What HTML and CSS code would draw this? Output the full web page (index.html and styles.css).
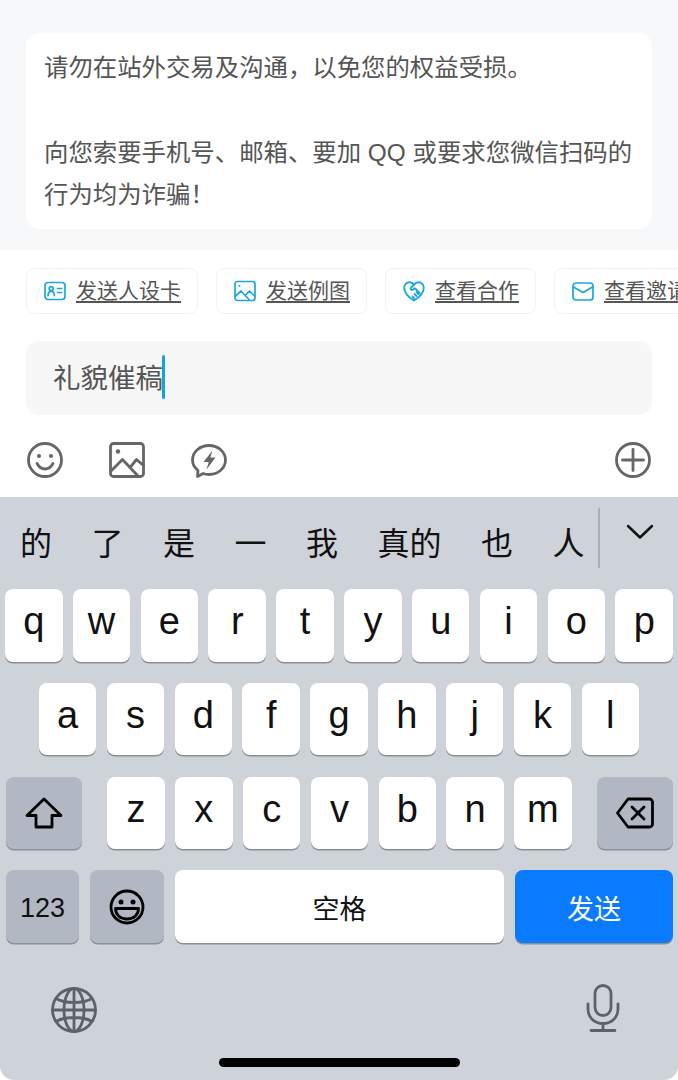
FILE: index.html
```html
<!DOCTYPE html>
<html lang="zh-CN">
  <head>
    <meta charset="UTF-8" />
    <meta name="viewport" content="width=device-width, initial-scale=1.0" />
    <title>私信</title>
    <link rel="stylesheet" href="styles.css">
  </head>
  <body>
    <section class="notice">
      <p class="notice-card">请勿在站外交易及沟通，以免您的权益受损。<br /><br />向您索要手机号、邮箱、要加 QQ 或要求您微信扫码的行为均为诈骗！</p>
    </section>

    <section class="composer">
      <div class="chips">
        <a class="chip">
          <svg class="chip-icon" viewBox="0 0 22 22"><rect x="1" y="2.500" width="20" height="17" rx="3"/><circle cx="7.200" cy="8.600" r="2"/><path d="M4 15.600c.3-3 1.500-4.400 3.200-4.400s2.900 1.400 3.200 4.400M13.500 8.500h4M13.500 12.500h4"/></svg>
          <span>发送人设卡</span>
        </a>
        <a class="chip">
          <svg class="chip-icon" viewBox="0 0 22 22"><rect x="1" y="1.500" width="20" height="19" rx="2.500"/><circle cx="5.500" cy="6" r="1" class="fill"/><path d="M1.500 16l5.500-5 8.500 9M12 14.500l3.500-3.500 5 5"/></svg>
          <span>发送例图</span>
        </a>
        <a class="chip">
          <svg class="chip-icon chip-heart" viewBox="0 0 22 22"><path d="M11 20.500C8.500 19 1.200 14 1.200 7.800 1.200 4.600 3.600 2.200 6.500 2.200c1.900 0 3.400.9 4.500 2.400 1.100-1.500 2.600-2.400 4.500-2.400 2.900 0 5.300 2.400 5.300 5.600 0 6.200-7.300 11.200-9.800 12.700z"/><path d="M11 4.800L7.800 8c-.9 1.200.7 2.600 1.900 1.800l2.100-1.600 5 5M9.500 16.500l1.500 1.500M11.500 14l2 2M13.500 12l2 2"/></svg>
          <span>查看合作</span>
        </a>
        <a class="chip">
          <svg class="chip-icon" viewBox="0 0 22 22"><rect x="1" y="3" width="20" height="17" rx="3"/><path d="M1.500 7l9.500 5.500L20.500 7"/></svg>
          <span>查看邀请</span>
        </a>
      </div>

      <div class="input-box">
        <span class="input-text">礼貌催稿</span><i class="caret"></i>
      </div>

      <div class="tools">
        <svg class="tool" viewBox="0 0 36 36"><circle cx="18" cy="18" r="16.500"/><circle cx="12" cy="14" r="2" class="fill"/><circle cx="24" cy="14" r="2" class="fill"/><path d="M10 21.500c2 3.700 4.800 5.500 8 5.500s6-1.800 8-5.500"/></svg>
        <svg class="tool" viewBox="0 0 36 36"><rect x="1.500" y="1.500" width="33" height="33" rx="3"/><circle cx="9" cy="9.500" r="2.200" class="fill"/><path d="M2 29l11.500-11.500L29 34M21 25.500l6.500-8 7 6"/></svg>
        <svg class="tool" viewBox="0 0 36 36"><path d="M18 3.500c9.200 0 16.500 6.400 16.500 14.500S27.200 32.500 18 32.500c-2 0-4-.3-5.800-1L6.500 34.500l.5-6C3.500 25.700 1.500 22 1.500 18 1.500 9.900 8.800 3.500 18 3.500z"/><path d="M21.500 8.500L12.500 20h5.200L15.500 27.500 24.500 15.500h-5.200z" class="fill"/></svg>
        <svg class="tool tool-end" viewBox="0 0 36 36"><circle cx="18" cy="18" r="16.500"/><path d="M18 7.500v21M7.500 18h21"/></svg>
      </div>
    </section>

    <section class="keyboard">
      <div class="candidates">
        <div class="candidate-list">
          <span>的</span><span>了</span><span>是</span><span>一</span><span>我</span><span>真的</span><span>也</span><span>人</span>
        </div>
        <div class="more">
          <svg viewBox="0 0 28 16"><path d="M2 2l12 11.500L26 2"/></svg>
        </div>
      </div>

      <div class="key-row">
        <b class="key">q</b><b class="key">w</b><b class="key">e</b><b class="key">r</b><b class="key">t</b><b class="key">y</b><b class="key">u</b><b class="key">i</b><b class="key">o</b><b class="key">p</b>
      </div>
      <div class="key-row row-center">
        <b class="key">a</b><b class="key">s</b><b class="key">d</b><b class="key">f</b><b class="key">g</b><b class="key">h</b><b class="key">j</b><b class="key">k</b><b class="key">l</b>
      </div>
      <div class="key-row row-shift">
        <b class="key key-dark key-wide key-shift">
          <svg class="key-icon" viewBox="0 0 38 32"><path d="M19 2L2 18.500h9v11.500h16V18.500h9z"/></svg>
        </b>
        <b class="key">z</b><b class="key">x</b><b class="key">c</b><b class="key">v</b><b class="key">b</b><b class="key">n</b><b class="key">m</b>
        <b class="key key-dark key-wide key-back">
          <svg class="key-icon" viewBox="0 0 38 32"><path d="M12 2h21.500a3 3 0 0 1 3 3v22a3 3 0 0 1-3 3H12L1.500 16z"/><path d="M16 10l12 12M28 10L16 22"/></svg>
        </b>
      </div>
      <div class="key-row row-bottom">
        <b class="key key-dark key-num">123</b>
        <b class="key key-dark key-emoji">
          <svg class="key-icon" viewBox="0 0 36 36"><circle cx="18" cy="18" r="16"/><circle cx="12" cy="13" r="2.500" class="fill"/><circle cx="24" cy="13" r="2.500" class="fill"/><path d="M6.500 19.500h23c0 6.500-5 10.500-11.500 10.500S6.500 26 6.500 19.500z"/></svg>
        </b>
        <b class="key key-space">空格</b>
        <b class="key key-send">发送</b>
      </div>

      <div class="sys-row">
        <svg class="sys-icon globe" viewBox="0 0 46 46"><circle cx="23" cy="23" r="21.500"/><ellipse cx="23" cy="23" rx="10" ry="21.500"/><path d="M23 1.500v43M1.500 23h43M5 11.500c5 3 11 4 18 4s13-1 18-4M5 34.500c5-3 11-4 18-4s13 1 18 4"/></svg>
        <svg class="sys-icon mic" viewBox="0 0 34 48"><rect x="9" y="1.500" width="16" height="30" rx="8"/><path d="M2 20v5c0 8.500 6.500 14.500 15 14.500S32 33.500 32 25v-5M17 39.500v6.500M5 46.500h24"/></svg>
      </div>
      <div class="home-bar"></div>
    </section>
  </body>
</html>
```

FILE: styles.css
```css
* {
  margin: 0;
  padding: 0;
  box-sizing: border-box;
}
html,
body {
  height: 1080px;
  overflow: hidden;
}
body {
  background: #fff;
  color: #555;
  font-family: "Liberation Sans", "Noto Sans CJK SC", sans-serif;
}
svg {
  display: block;
  fill: none;
  stroke-linecap: round;
  stroke-linejoin: round;
}
.fill {
  fill: currentColor;
  stroke: none;
}

.notice {
  height: 250px;
  padding: 33px 26px 0;
  background: #f6f8fa;
}
.notice-card {
  height: 196px;
  padding: 13.500px 18px;
  border-radius: 14px;
  background: #fff;
  font-size: 24.400px;
  line-height: 42.500px;
}

.composer {
  height: 247px;
  padding-top: 18px;
  overflow: hidden;
}
.chips {
  display: flex;
  gap: 18px;
  padding-left: 26px;
  width: 900px;
}
.chip {
  display: flex;
  align-items: center;
  gap: 10px;
  height: 46px;
  padding: 0 16px 0 18px;
  border: 1px solid #f1f2f4;
  border-radius: 8px;
  font-size: 21px;
  text-decoration: underline;
  text-underline-offset: 3px;
}
.chip span {
  margin-top: -4px;
}
.chip-icon {
  width: 22px;
  height: 22px;
  margin-left: -1px;
  stroke: #1ba6d9;
  stroke-width: 1.700;
  color: #1ba6d9;
}
.chip-heart {
  stroke-width: 1.900;
}

.input-box {
  display: flex;
  align-items: center;
  height: 74px;
  margin: 27px 26px 0;
  padding-left: 27px;
  border-radius: 14px;
  background: #f7f7f7;
  font-size: 27.500px;
}
.input-text {
  margin-top: -4px;
}
.caret {
  width: 3px;
  height: 44px;
  margin: -2px 0 0 -1px;
  border-radius: 2px;
  background: #12a4dc;
}

.tools {
  display: flex;
  gap: 46px;
  height: 36px;
  margin: 27px 27px 0;
  color: #666;
}
.tool {
  width: 36px;
  height: 36px;
  stroke: #666;
  stroke-width: 2.800;
}
.tool-end {
  margin-left: auto;
}

.keyboard {
  height: 583px;
  border-radius: 0 0 14px 14px;
  background: #ced3da;
  color: #000;
}
.candidates {
  display: flex;
  height: 92px;
  padding: 11px 0 21px;
}
.candidate-list {
  display: flex;
  align-items: center;
  flex: 1;
  gap: 39.500px;
  padding: 6px 0 0 20px;
  font-size: 32px;
  overflow: hidden;
  color: #111;
}
.more {
  width: 80px;
  flex: none;
  padding: 16px 0 0 26px;
  border-left: 2px solid #a9aeb5;
}
.more svg {
  width: 28px;
  height: 16px;
  stroke: #111;
  stroke-width: 2.500;
}

.key-row {
  display: flex;
  gap: 10.330px;
  height: 73px;
  padding: 0 5px;
  margin-bottom: 20.800px;
}
.row-center {
  justify-content: center;
}
.row-shift {
  padding: 0 5px 0 6px;
}
.row-bottom {
  gap: 11px;
  padding-left: 6px;
}
.key {
  display: flex;
  align-items: center;
  justify-content: center;
  width: 57.500px;
  height: 72.500px;
  border-radius: 8px;
  background: #fff;
  box-shadow: 0 1.500px 0 #8c8e92;
  font-size: 38px;
  font-weight: 400;
  padding-bottom: 7px;
  color: #111;
}
.key-dark {
  background: #b1b8c4;
}
.key-wide {
  width: 76px;
  padding-bottom: 0;
}
.key-shift {
  margin-right: 15px;
}
.key-back {
  margin-left: 15px;
}
.key-icon {
  width: 38px;
  height: 32px;
  stroke: #000;
  stroke-width: 2.800;
  color: #000;
}
.key-num {
  width: 73px;
  padding: 3px 0 0;
  font-size: 27px;
}
.key-emoji {
  width: 74px;
  padding: 0;
}
.key-emoji .key-icon {
  width: 36px;
  height: 36px;
}
.key-space {
  flex: 1;
  padding: 2px 0 0;
  font-size: 27px;
}
.key-send {
  width: 158px;
  padding: 2px 0 0;
  background: #0a7bff;
  color: #fff;
  font-size: 27px;
}

.sys-row {
  display: flex;
  justify-content: space-between;
  align-items: flex-start;
  padding: 22px 58px 0 51px;
  height: 71px;
  margin-top: -2px;
}
.sys-icon {
  width: 46px;
  height: 46px;
  stroke: #5d6269;
  stroke-width: 2.800;
}
.globe {
  margin-top: 3px;
}
.mic {
  width: 34px;
  height: 48px;
}
.home-bar {
  width: 241px;
  height: 9px;
  margin: 25px auto 0;
  border-radius: 5px;
  background: #000;
}
```
